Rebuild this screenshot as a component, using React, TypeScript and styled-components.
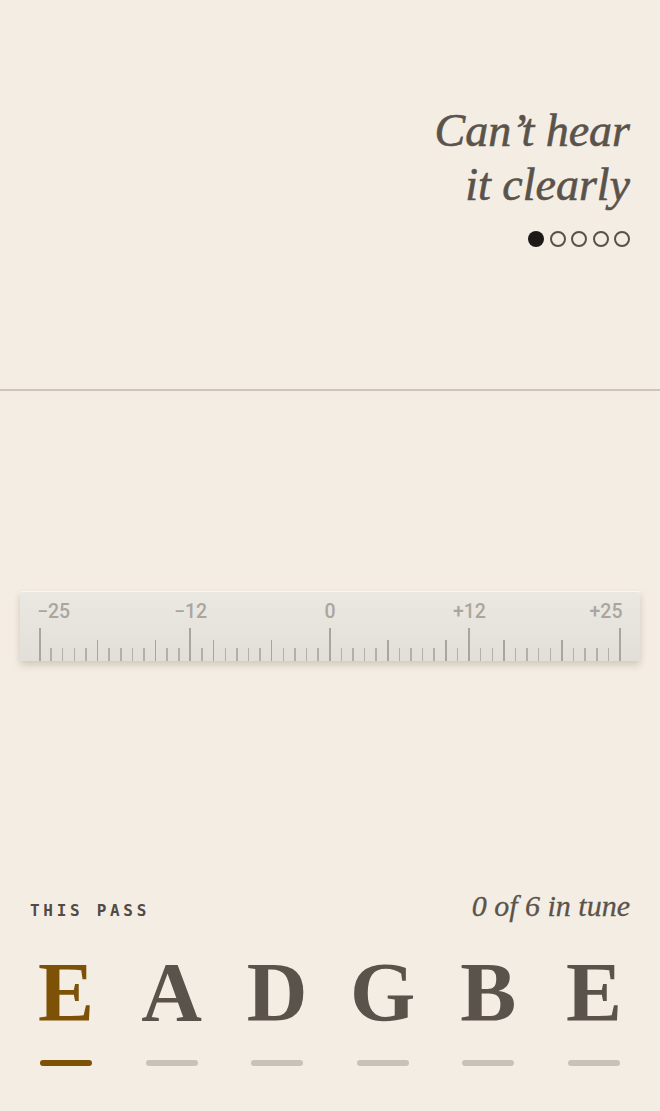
import React from "react";
import styled, { createGlobalStyle } from "styled-components";

const GlobalStyle = createGlobalStyle`
  html, body {
    margin: 0;
    padding: 0;
    background: #f4ede3;
  }
  body {
    font-family: "Liberation Serif", serif;
  }
`;

const Page = styled.div`
  height: 1111px;
  display: flex;
  flex-direction: column;
  background: #f4ede3;
  overflow: hidden;
`;

const TopPanel = styled.section`
  height: 389px;
  border-bottom: 2px solid #cdc5ba;
  box-sizing: content-box;
  padding: 0 30px;
  display: flex;
  flex-direction: column;
  align-items: flex-end;
`;

const Heading = styled.h1`
  margin: 104px 0 0 0;
  font-family: "Liberation Serif", serif;
  font-style: italic;
  font-weight: 400;
  font-size: 46px;
  line-height: 54px;
  color: #5a534b;
  -webkit-text-stroke: 0.6px #5a534b;
  text-align: right;
`;

const Dots = styled.div`
  display: flex;
  gap: 5.4px;
  margin-top: 19px;
`;

const Dot = styled.span<{ $filled?: boolean }>`
  width: 16px;
  height: 16px;
  border-radius: 50%;
  box-sizing: border-box;
  background: ${(p) => (p.$filled ? "#1c1a17" : "transparent")};
  border: ${(p) => (p.$filled ? "none" : "2.5px solid #57514a")};
`;

const Ruler = styled.div`
  margin: 200px 20px 0 20px;
  height: 70px;
  position: relative;
  border-radius: 2px;
  background: linear-gradient(180deg, #ebe8e2 0%, #e6e3dd 60%, #e2dfd9 100%);
  box-shadow: 0 4px 7px rgba(90, 70, 50, 0.22), inset 0 1px 0 rgba(255, 255, 255, 0.6);
  padding: 0 18.5px;
  display: flex;
  flex-direction: column;
  justify-content: flex-end;
`;

const Labels = styled.div`
  position: relative;
  height: 36px;
`;

const Label = styled.span<{ $align: "start" | "center" | "end" }>`
  position: absolute;
  top: 10.5px;
  font-family: Roboto, "Liberation Sans", sans-serif;
  font-weight: 500;
  font-size: 19.5px;
  line-height: 19px;
  color: #aaa69f;
  white-space: nowrap;
  transform: ${(p) =>
    p.$align === "center" ? "translateX(-50%)" : p.$align === "end" ? "translateX(-100%)" : "translateX(-2.5px)"};
  ${(p) => (p.$align === "end" ? "margin-left: 2px;" : "")}
`;

const Ticks = styled.div`
  display: flex;
  justify-content: space-between;
  align-items: flex-end;
  height: 34px;
`;

const Tick = styled.span<{ $kind: "major" | "mid" | "minor" }>`
  width: 2px;
  display: flex;
  justify-content: center;
  &::before {
    content: "";
    display: block;
    width: ${(p) => (p.$kind === "major" ? "2px" : "1.5px")};
    height: ${(p) => (p.$kind === "major" ? "33px" : p.$kind === "mid" ? "21px" : "13px")};
    background: ${(p) => (p.$kind === "minor" ? "#b3afa9" : "#a8a49e")};
  }
`;

const Bottom = styled.section`
  margin-top: auto;
  padding: 0 30px 45px 30px;
`;

const PassRow = styled.div`
  display: flex;
  justify-content: space-between;
  align-items: baseline;
  height: 32px;
`;

const PassLabel = styled.span`
  font-family: "DejaVu Sans Mono", "Liberation Mono", monospace;
  font-weight: 700;
  font-size: 16px;
  letter-spacing: 3.7px;
  color: #524b44;
`;

const TuneCount = styled.span`
  font-family: "Liberation Serif", serif;
  font-style: italic;
  font-size: 30px;
  line-height: 32px;
  color: #5a534b;
  -webkit-text-stroke: 0.3px #5a534b;
`;

const Strings = styled.div`
  display: flex;
  justify-content: space-between;
  padding: 0 10px;
  margin-top: 29px;
`;

const StringCol = styled.div`
  width: 52px;
  display: flex;
  flex-direction: column;
  align-items: center;
`;

const Note = styled.span<{ $active?: boolean }>`
  font-family: "Liberation Serif", serif;
  font-weight: 700;
  font-size: 84px;
  line-height: 84px;
  color: ${(p) => (p.$active ? "#7d5207" : "#5a534b")};
`;

const Bar = styled.span<{ $active?: boolean }>`
  margin-top: 25px;
  width: 52px;
  height: 6px;
  border-radius: 3px;
  background: ${(p) => (p.$active ? "#7d5207" : "#c9c2b8")};
`;

const labels: { v: number; text: string; align: "start" | "center" | "end" }[] = [
  { v: -25, text: "\u221225", align: "start" },
  { v: -12, text: "\u221212", align: "center" },
  { v: 0, text: "0", align: "center" },
  { v: 12, text: "+12", align: "center" },
  { v: 25, text: "+25", align: "end" },
];

const notes = ["E", "A", "D", "G", "B", "E"];

function tickKind(v: number): "major" | "mid" | "minor" {
  if (v === -25 || v === -12 || v === 0 || v === 12 || v === 25) return "major";
  if (v % 5 === 0) return "mid";
  return "minor";
}

export default function App() {
  const ticks = Array.from({ length: 51 }, (_, i) => i - 25);
  return (
    <>
      <GlobalStyle />
      <Page>
        <TopPanel>
          <Heading>
            Can’t hear
            <br />
            it clearly
          </Heading>
          <Dots>
            {[0, 1, 2, 3, 4].map((i) => (
              <Dot key={i} $filled={i === 0} />
            ))}
          </Dots>
        </TopPanel>

        <Ruler>
          <Labels>
            {labels.map((l) => (
              <Label
                key={l.v}
                $align={l.align}
                style={{ left: `calc(1px + ${((l.v + 25) / 50) * 100}% - ${((l.v + 25) / 50) * 2}px)` }}
              >
                {l.text}
              </Label>
            ))}
          </Labels>
          <Ticks>
            {ticks.map((v) => (
              <Tick key={v} $kind={tickKind(v)} />
            ))}
          </Ticks>
        </Ruler>

        <Bottom>
          <PassRow>
            <PassLabel>THIS PASS</PassLabel>
            <TuneCount>0 of 6 in tune</TuneCount>
          </PassRow>
          <Strings>
            {notes.map((n, i) => (
              <StringCol key={i}>
                <Note $active={i === 0}>{n}</Note>
                <Bar $active={i === 0} />
              </StringCol>
            ))}
          </Strings>
        </Bottom>
      </Page>
    </>
  );
}
